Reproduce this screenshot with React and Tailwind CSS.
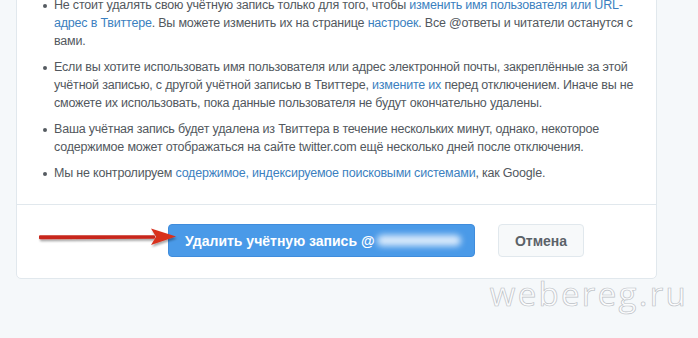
import React from "react";

function Link({ children }) {
  return <span className="text-[#3b7fc0]">{children}</span>;
}

function Item({ children }) {
  return (
    <li className="flex mb-[8px] last:mb-0">
      <span className="w-[13px] shrink-0 flex pt-[8px]">
        <span className="block w-[4px] h-[4px] rounded-full bg-[#555b61] ml-[2px]" />
      </span>
      <span className="whitespace-nowrap">{children}</span>
    </li>
  );
}

function RedArrow() {
  return (
    <svg
      width="150"
      height="24"
      viewBox="0 0 150 24"
      className="absolute left-[36px] top-[225px]"
    >
      <defs>
        <filter id="sh" x="-10%" y="-50%" width="120%" height="200%">
          <feDropShadow dx="1" dy="2" stdDeviation="1.2" floodColor="#000" floodOpacity="0.35" />
        </filter>
      </defs>
      <g filter="url(#sh)">
        <path d="M4 11.2 L118 11.2 L118 12.8 L4 13.2 Z" fill="#c8281c" stroke="#c8281c" strokeWidth="2" strokeLinejoin="round" />
        <path d="M115 3.5 L140 11.5 L115 20 L120 11.8 Z" fill="#d8301f" />
      </g>
    </svg>
  );
}

export default function App() {
  return (
    <div
      className="relative w-full h-[338px] overflow-hidden bg-[#f5f8fa] text-[12.5px] tracking-[-0.2px] leading-[18px] text-[#52585e]"
      style={{ fontFamily: '"Liberation Sans", Arial, sans-serif' }}
    >
      {/* card */}
      <div className="ml-[16px] w-[641px] -mt-[24px] bg-white border border-[#e1e8ed] rounded-b-[5px]">
        <div className="pt-[19px] pb-[22px] pl-[24px] pr-[20px]">
          <ul>
            <Item>
              Не стоит удалять свою учётную запись только для того, чтобы{" "}
              <Link>изменить имя пользователя или URL-</Link>
              <br />
              <Link>адрес в Твиттере</Link>. Вы можете изменить их на странице{" "}
              <Link>настроек</Link>. Все @ответы и читатели останутся с
              <br />
              вами.
            </Item>
            <Item>
              Если вы хотите использовать имя пользователя или адрес электронной почты, закреплённые за этой
              <br />
              учётной записью, с другой учётной записью в Твиттере, <Link>измените их</Link> перед отключением. Иначе вы не
              <br />
              сможете их использовать, пока данные пользователя не будут окончательно удалены.
            </Item>
            <Item>
              Ваша учётная запись будет удалена из Твиттера в течение нескольких минут, однако, некоторое
              <br />
              содержимое может отображаться на сайте twitter.com ещё несколько дней после отключения.
            </Item>
            <Item>
              Мы не контролируем <Link>содержимое, индексируемое поисковыми системами</Link>, как Google.
            </Item>
          </ul>
        </div>

        {/* actions */}
        <div className="border-t border-[#e1e8ed] pt-[19px] pb-[21px] pl-[151px] flex items-center gap-[23px] tracking-normal">
          <button className="h-[33px] w-[307px] rounded-[4px] bg-[#4a9ae8] border border-[#3f8cdc] text-white font-bold text-[14px] flex items-center pl-[16px]">
            <span>Удалить учётную запись @</span>
            <span className="ml-[2px] h-[11px] w-[84px] rounded-full bg-[#d8e9fb] blur-[3px]" />
          </button>
          <button className="h-[33px] w-[86px] rounded-[4px] bg-[#f7f9fa] border border-[#e1e8ed] text-[#5b6268] font-bold text-[14px]">
            Отмена
          </button>
        </div>
      </div>

      <RedArrow />

      {/* watermark */}
      <div className="flex justify-end pr-[10px] -mt-[3px]">
        <span
          className="text-[33px] leading-[36px] tracking-[2.3px] text-[#fbfcfd] [-webkit-text-stroke:0.7px_#bcc1c6]"
          style={{ fontFamily: '"Open Sans", sans-serif' }}
        >
          webereg.ru
        </span>
      </div>
    </div>
  );
}
